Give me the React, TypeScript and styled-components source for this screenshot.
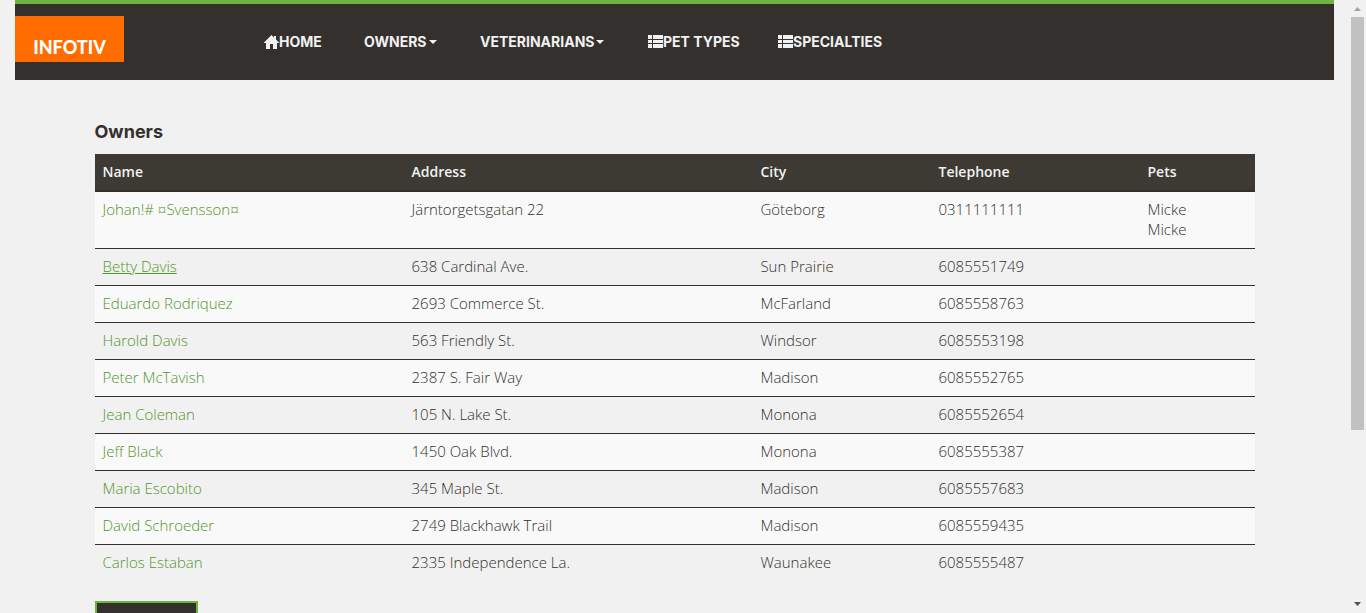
import React from 'react';
import styled, { createGlobalStyle, css } from 'styled-components';

const GlobalStyle = createGlobalStyle`
  *, *::before, *::after { box-sizing: border-box; }
  body {
    margin: 0;
    background: #f1f1f1;
    color: #34302d;
    font-family: "Open Sans", "Noto Sans", sans-serif;
    font-size: 15px;
    font-weight: 340;
    line-height: 20px;
  }
`;

const Viewport = styled.div`
  display: flex;
  height: 100vh;
  overflow: hidden;
`;

const Page = styled.div`
  flex: 1;
  min-width: 0;
  overflow: hidden;
`;

const NavBar = styled.nav`
  display: flex;
  margin: 0 15px;
  height: 80px;
  padding-top: 12px;
  background: #34302d;
  border-top: 4px solid #6db33f;
`;

const Brand = styled.a`
  display: flex;
  align-items: center;
  justify-content: center;
  width: 109px;
  height: 46px;
  padding-top: 16px;
  background: #ff6c00;
  color: #fff;
  font-family: Lato, sans-serif;
  font-size: 18px;
  font-weight: 900;
  text-decoration: none;
`;

const NavList = styled.ul`
  display: flex;
  gap: 40px;
  margin: 0 0 0 140px;
  padding: 16px 0 0;
  list-style: none;
`;

const NavItem = styled.li<{ $width: number }>`
  width: ${({ $width }) => $width}px;
`;

const navText = css`
  display: flex;
  align-items: center;
  padding: 0;
  border: 0;
  background: none;
  color: #f1f1f1;
  font-family: Inter, sans-serif;
  font-size: 14px;
  font-weight: 700;
  line-height: 20px;
  white-space: nowrap;
  text-decoration: none;
`;

const NavLink = styled.a`${navText}`;
const NavToggle = styled.button`${navText} cursor: pointer;`;

const Caret = styled.span`
  margin-left: 2px;
  border-top: 4px solid #f1f1f1;
  border-left: 4px solid transparent;
  border-right: 4px solid transparent;
`;

const Icon = styled.svg`
  flex: none;
  width: 15px;
  height: 14px;
  fill: #f1f1f1;
`;

const Container = styled.main`
  max-width: 1160px;
  margin: 0 auto;
  padding-top: 42px;
`;

const Title = styled.h2`
  margin: 0 0 12px;
  font-family: Inter, sans-serif;
  font-size: 18px;
  font-weight: 700;
  line-height: 20px;
`;

const OwnerTable = styled.table`
  width: 100%;
  margin-bottom: 20px;
  border-spacing: 0;
  table-layout: fixed;
`;

const Col = styled.col<{ $share: number }>`
  width: ${({ $share }) => $share}%;
`;

const HeadCell = styled.th`
  padding: 8px;
  background: #3d3933;
  border-bottom: 2px solid #34302d;
  color: #f1f1f1;
  font-size: 14px;
  font-weight: 650;
  text-align: left;
`;

const Row = styled.tr`
  &:nth-child(odd) { background: #f9f9f9; }
`;

const Cell = styled.td`
  padding: 7px 8px 9px;
  vertical-align: top;
  border-top: 1px solid #34302d;
  ${Row}:first-child & { border-top: 0; }
`;

const OwnerLink = styled.a<{ $active?: boolean }>`
  color: ${({ $active }) => ($active ? '#4f9a26' : '#55952c')};
  text-decoration: ${({ $active }) => ($active ? 'underline' : 'none')};
`;

const Pet = styled.span`
  display: block;
`;

const AddButton = styled.button`
  display: block;
  width: 103px;
  height: 48px;
  background: #34302d;
  border: 2px solid #6db33f;
`;

const ScrollTrack = styled.div`
  display: flex;
  flex-direction: column;
  align-items: center;
  width: 17px;
  background: #f1f1f1;
`;

const ScrollArrow = styled.svg`
  flex: none;
  width: 17px;
  height: 17px;
`;

const ScrollThumb = styled.div`
  flex: 413;
  width: 13px;
  background: #c1c1c1;
`;

const ScrollRest = styled.div`
  flex: 166;
`;

const HomeIcon = () => (
  <Icon viewBox="0 0 15 14" aria-hidden="true">
    <path d="M7.5 0 10 2.5V1h2v3.5L15 7.5V8h-2v6H9V9H6v5H2V8H0v-.5z" />
  </Icon>
);

const ListIcon = () => (
  <Icon viewBox="0 0 15 14" aria-hidden="true">
    <path d="M0 0h4v4H0zM5 0h10v4H5zM0 5h4v3H0zM5 5h10v3H5zM0 9h4v4H0zM5 9h10v4H5z" />
  </Icon>
);

const columns = [
  { label: 'Name', share: 26.64 },
  { label: 'Address', share: 30.08 },
  { label: 'City', share: 15.35 },
  { label: 'Telephone', share: 18.02 },
  { label: 'Pets', share: 9.91 },
];

interface Owner {
  name: string;
  address: string;
  city: string;
  phone: string;
  pets?: string[];
  active?: boolean;
}

const owners: Owner[] = [
  { name: 'Johan!# ¤Svensson¤', address: 'Järntorgetsgatan 22', city: 'Göteborg', phone: '0311111111', pets: ['Micke', 'Micke'] },
  { name: 'Betty Davis', address: '638 Cardinal Ave.', city: 'Sun Prairie', phone: '6085551749', active: true },
  { name: 'Eduardo Rodriquez', address: '2693 Commerce St.', city: 'McFarland', phone: '6085558763' },
  { name: 'Harold Davis', address: '563 Friendly St.', city: 'Windsor', phone: '6085553198' },
  { name: 'Peter McTavish', address: '2387 S. Fair Way', city: 'Madison', phone: '6085552765' },
  { name: 'Jean Coleman', address: '105 N. Lake St.', city: 'Monona', phone: '6085552654' },
  { name: 'Jeff Black', address: '1450 Oak Blvd.', city: 'Monona', phone: '6085555387' },
  { name: 'Maria Escobito', address: '345 Maple St.', city: 'Madison', phone: '6085557683' },
  { name: 'David Schroeder', address: '2749 Blackhawk Trail', city: 'Madison', phone: '6085559435' },
  { name: 'Carlos Estaban', address: '2335 Independence La.', city: 'Waunakee', phone: '6085555487' },
];

export default function App() {
  return (
    <>
      <GlobalStyle />
      <Viewport>
        <Page>
          <NavBar>
            <Brand href="#">INFOTIV</Brand>
            <NavList>
              <NavItem $width={60}><NavLink href="#"><HomeIcon />HOME</NavLink></NavItem>
              <NavItem $width={76}><NavToggle>OWNERS<Caret /></NavToggle></NavItem>
              <NavItem $width={128}><NavToggle>VETERINARIANS<Caret /></NavToggle></NavItem>
              <NavItem $width={90}><NavLink href="#"><ListIcon />PET TYPES</NavLink></NavItem>
              <NavItem $width={104}><NavLink href="#"><ListIcon />SPECIALTIES</NavLink></NavItem>
            </NavList>
          </NavBar>
          <Container>
            <Title>Owners</Title>
            <OwnerTable>
              <colgroup>
                {columns.map((c) => <Col key={c.label} $share={c.share} />)}
              </colgroup>
              <thead>
                <tr>{columns.map((c) => <HeadCell key={c.label} scope="col">{c.label}</HeadCell>)}</tr>
              </thead>
              <tbody>
                {owners.map((o) => (
                  <Row key={o.name}>
                    <Cell><OwnerLink href="#" $active={o.active}>{o.name}</OwnerLink></Cell>
                    <Cell>{o.address}</Cell>
                    <Cell>{o.city}</Cell>
                    <Cell>{o.phone}</Cell>
                    <Cell>{o.pets?.map((p, i) => <Pet key={i}>{p}</Pet>)}</Cell>
                  </Row>
                ))}
              </tbody>
            </OwnerTable>
            <AddButton aria-label="Add owner" />
          </Container>
        </Page>
        <ScrollTrack aria-hidden="true">
          <ScrollArrow viewBox="0 0 17 17"><path d="M5 11 8.5 7 12 11z" fill="#a3a3a3" /></ScrollArrow>
          <ScrollThumb />
          <ScrollRest />
          <ScrollArrow viewBox="0 0 17 17"><path d="M5 6h7L8.500 10z" fill="#505050" /></ScrollArrow>
        </ScrollTrack>
      </Viewport>
    </>
  );
}
